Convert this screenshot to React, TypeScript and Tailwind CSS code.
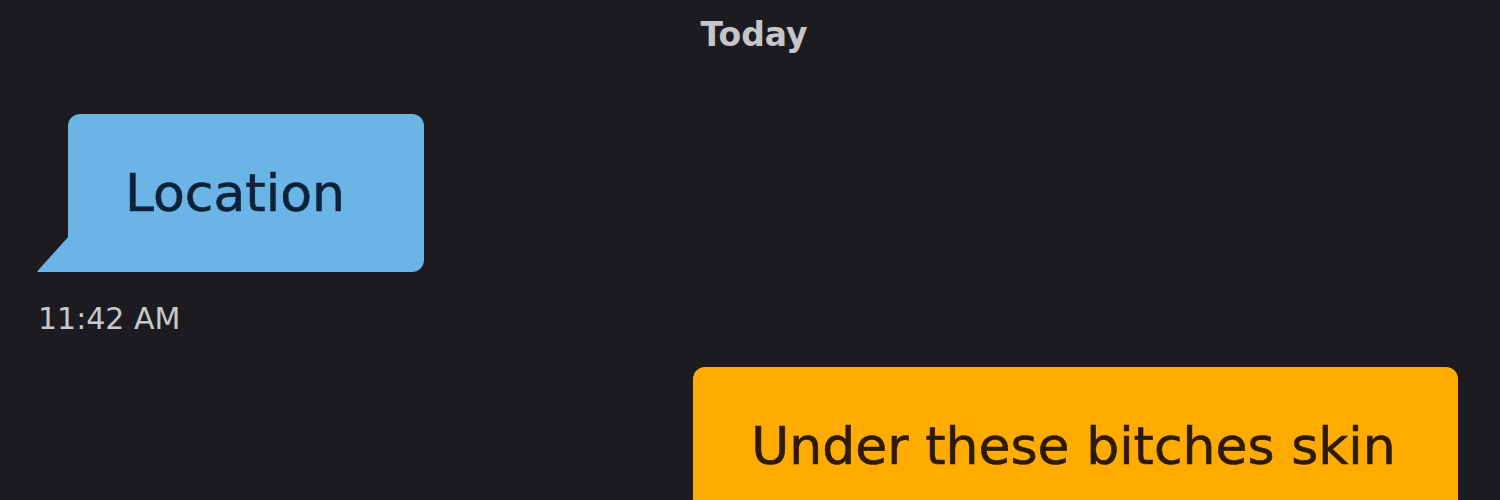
import React from 'react';

const font = { fontFamily: '"DejaVu Sans", "Liberation Sans", sans-serif' };

// Incoming bubble with the little tail hanging off its lower-left corner
const IncomingBubble: React.FC<{ text: string }> = ({ text }) => (
  <div className="relative ml-[68px] w-[356px]">
    <div className="h-[158px] bg-[#6bb5e6] rounded-[12px] rounded-bl-none flex items-center pl-[57px] text-[52px] text-[#0d2238] leading-none [-webkit-text-stroke:0.6px_#0d2238]">
      {text}
    </div>
    <svg className="absolute left-[-31px] bottom-0" width="32" height="36" viewBox="0 0 32 36">
      <path d="M32 0 L32 36 L0 36 Q2 33 5 30 Z" fill="#6bb5e6" />
    </svg>
  </div>
);

const OutgoingBubble: React.FC<{ text: string }> = ({ text }) => (
  <div className="self-end mr-[42px] w-[765px] h-[158px] shrink-0 bg-[#ffab00] rounded-[12px] flex items-center justify-center pr-[4px] text-[52px] text-[#2b1a06] leading-none [-webkit-text-stroke:0.6px_#2b1a06]">
    {text}
  </div>
);

export default function App() {
  return (
    <div className="h-[500px] w-[1500px] overflow-hidden bg-[#1c1b20] flex flex-col" style={font}>
      <div className="pt-[14px] text-center text-[33px] leading-[42px] font-bold text-[#c6c6c8] pl-[8px]">Today</div>

      <div className="mt-[58px]">
        <IncomingBubble text="Location" />
      </div>
      <div className="mt-[29px] ml-[38px] text-[30px] leading-[36px] text-[#c8c8ca]">11:42 AM</div>

      <div className="mt-[30px] flex flex-col">
        <OutgoingBubble text="Under these bitches skin" />
      </div>
    </div>
  );
}
